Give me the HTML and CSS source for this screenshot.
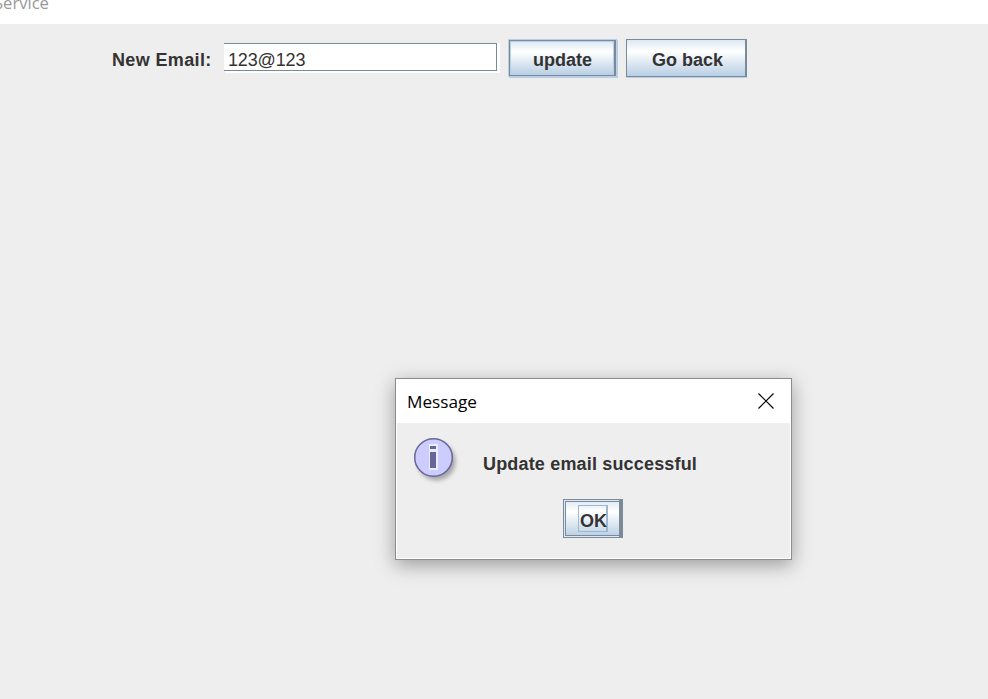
FILE: index.html
```html
<!DOCTYPE html>
<html lang="en">
<head>
<meta charset="utf-8">
<title>Service</title>
<link rel="stylesheet" href="styles.css">
</head>
<body>
<header class="titlebar"><span>Service</span></header>
<main class="form">
  <label class="label">New Email:</label>
  <div class="field"><div class="field-inner">123@123</div></div>
  <button class="btn update"><span>update</span></button>
  <button class="btn back"><span>Go back</span></button>
</main>
<section class="dialog">
  <div class="dialog-head">
    <span class="dialog-title">Message</span>
    <svg class="close" width="16" height="16" viewBox="0 0 16 16"><path d="M.5.5l15 15M15.5.5l-15 15" stroke="#000" stroke-width="1.15" fill="none"/></svg>
  </div>
  <div class="dialog-body">
    <div class="message-row">
      <svg class="info" width="48" height="50" viewBox="0 0 48 50">
        <defs><filter id="soft" x="-20%" y="-20%" width="150%" height="150%"><feGaussianBlur stdDeviation="2"/></filter></defs>
        <circle cx="23.5" cy="24.5" r="19" fill="#777" opacity=".6" filter="url(#soft)"/>
        <circle cx="20.5" cy="20.5" r="18.8" fill="#ccccff" stroke="#666699" stroke-width="1.5"/>
        <path d="M16 7h9v26h-9z" fill="#ececff"/>
        <path d="M17 9h6v3h-6zM17 15h6v16h-6z" fill="#666699"/>
      </svg>
      <span class="message">Update email successful</span>
    </div>
    <button class="btn ok"><span>OK</span></button>
  </div>
</section>
</body>
</html>
```
FILE: styles.css
```css
* { box-sizing: border-box; }
body {
  margin: 0;
  height: 699px;
  overflow: hidden;
  background: #eee;
  color: #333;
  font: bold 18px/20px "Liberation Sans", sans-serif;
}
.titlebar {
  height: 24px;
  overflow: hidden;
  background: #fff;
  color: #999;
  font: 16.6px/22px "Open Sans", sans-serif;
}
.titlebar span { display: block; margin: -8px 0 0 -6px; }
.form {
  display: flex;
  align-items: flex-start;
  padding: 15px 0 0 112px;
}
.label {
  width: 112px;
  margin-top: 11px;
  letter-spacing: .36px;
  white-space: nowrap;
}
.field {
  width: 276px;
  height: 30px;
  margin-top: 4px;
  padding-right: 3px;
  background: linear-gradient(#eee, #eee) 0 100% / 1px 2px no-repeat, #fff;
}
.field-inner {
  height: 28px;
  padding: 6px 0 0 4px;
  border: solid #7a8a99;
  border-width: 1px 1px 1px 0;
  font-weight: 400;
  letter-spacing: -.15px;
}
.btn {
  display: flex;
  justify-content: center;
  padding: 0;
  border: 1px solid #7a8a99;
  border-right-width: 2px;
  border-radius: 0;
  background: linear-gradient(#dde8f3 0, #fff 32%, #dce7f1 65%, #b8cfe5 100%);
  color: #333;
  font: inherit;
}
.update {
  width: 107px;
  height: 36px;
  margin: 1px 0 0 9px;
  padding: 9px 0 0 1px;
  box-shadow: inset 0 0 0 1px #b8cfe5, 0 0 0 1px #b8cfe5, 1px 1px 0 1px #b8cfe5, -1px 0 0 0 #b8cfe5;
}
.back {
  width: 121px;
  height: 38px;
  margin-left: 10px;
  padding: 10px 0 0 3px;
  box-shadow: 0 1px #b8cfe5;
}
.dialog {
  position: absolute;
  left: 395px;
  top: 378px;
  width: 397px;
  height: 182px;
  border: 1px solid #8c8c8c;
  background: #fff;
  box-shadow: 0 5px 18px rgba(0, 0, 0, .35);
}
.dialog-head {
  display: flex;
  justify-content: space-between;
  height: 44px;
  padding: 13px 17px 0 11px;
  color: #000;
  font: 17.2px/20px "Open Sans", sans-serif;
}
.dialog-body {
  height: 135px;
  margin: 0 1px;
  padding: 14px 0 0 16px;
  background: #eee;
}
.message-row { display: flex; }
.message { margin: 17px 0 0 22px; letter-spacing: .17px; }
.ok {
  width: 60px;
  height: 39px;
  margin: 12px 0 0 150px;
  padding: 5px 0 0;
  border-right-width: 1px;
  box-shadow: inset -3px 0 #7a8a99, inset 0 0 0 1px #dce9f5, inset 0 0 0 2px #7a8a99;
}
.ok span {
  width: 30px;
  height: 27px;
  padding: 5px 0 0 1px;
  border: 1px solid #9fb7ce;
  border-right-width: 2px;
}
.close { margin-top: .5px; }
```
